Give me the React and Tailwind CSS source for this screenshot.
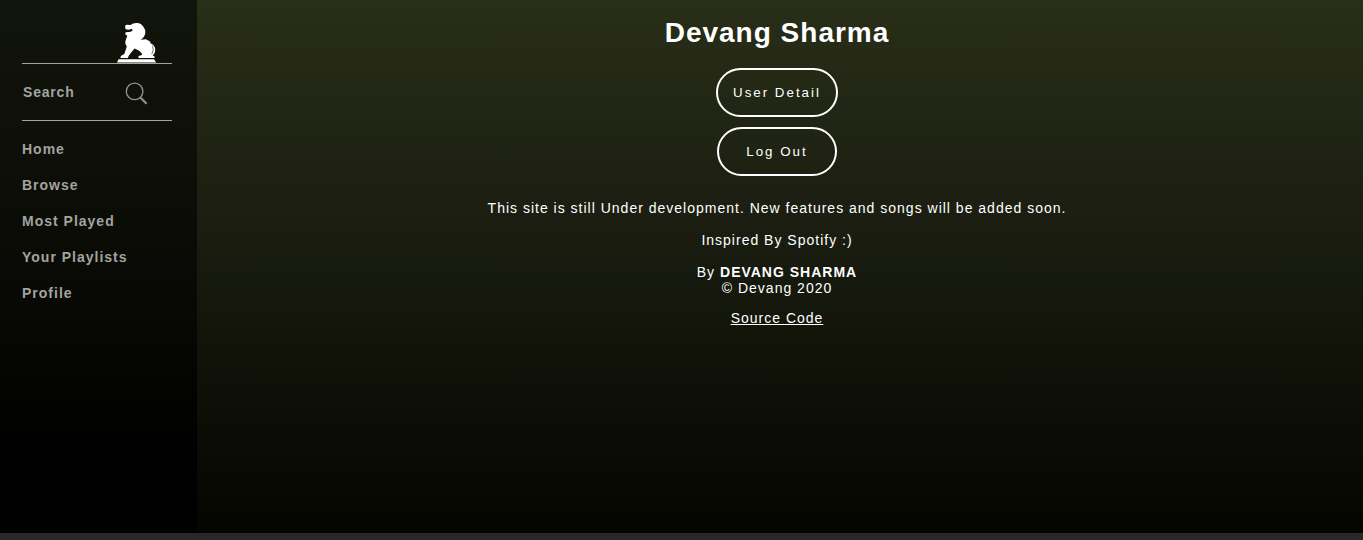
const links = ["Home", "Browse", "Most Played", "Your Playlists", "Profile"];

function LionLogo() {
  return (
    <svg viewBox="0 0 42 42" className="h-[42px] w-[42px]" fill="#fff">
      <path d="M1 41.6 L2.5 38.2 H38 L40.2 41.6 Z" />
      <path d="M9 5 L10.5 3.8 L14.5 4 Q17 1.7 21 1.9 Q25.5 2.3 27.2 5.5 Q29.8 8.5 29.3 12.2 Q28.5 16.5 24.6 18.8 L30 18.2 L34 20.5 L34.5 22.2 Q39.3 24.5 39.3 28.7 Q39.3 32.5 36.7 34.6 L38.5 35.3 V37.1 H22.5 V35 L26 34 Q26 31.5 22.8 29.5 L18.5 27.6 L13 34.2 L11.8 37.1 H4.5 L4.8 35 L8.3 33 L10.8 25.5 Q8.4 22 9.8 19 L11.3 14.7 L9.3 13.6 L9.6 11.2 L14.8 10.8 L16.7 9.2 L15.8 7.7 L13 8.7 L9.6 8.2 Z" />
      <path d="M36.6 24.8 Q38.2 29 35.8 33.2" fill="none" stroke="#15180e" strokeWidth="0.6" />
    </svg>
  );
}

function SearchIcon() {
  return (
    <svg viewBox="0 0 24 24" className="h-6 w-6" fill="none" stroke="#92928e">
      <circle cx="9.6" cy="9.4" r="8.3" strokeWidth="1.3" />
      <path d="M15.3 15.5 L21.6 21.7" strokeWidth="2.2" />
    </svg>
  );
}

export default function App() {
  return (
    <div className="flex h-[540px] w-full flex-col overflow-hidden bg-[#292727] font-['Liberation_Sans',Arial,sans-serif] text-sm leading-4 tracking-[1px] text-white">
      <div className="flex h-[533px] bg-[linear-gradient(to_bottom,#292e18,#1a1d10_230px,#040500)]">
        <aside className="flex w-[197px] shrink-0 flex-col bg-[linear-gradient(to_bottom,#12150c,#080904_300px,#000_450px)] pt-[21px] pr-[25px] pl-[22px] font-bold text-[#a3a39f]">
          <div className="flex h-[43px] justify-end border-b border-[#a3a39f] pr-[14px]">
            <LionLogo />
          </div>
          <div className="flex h-[57px] items-center justify-between border-b border-[#a3a39f] pr-[23px] pl-px">
            <span className="tracking-[0.8px]">Search</span>
            <span className="pt-[3px]"><SearchIcon /></span>
          </div>
          <nav className="flex flex-col gap-5 pt-5">
            {links.map((label) => (
              <a key={label} className="h-4">{label}</a>
            ))}
          </nav>
        </aside>
        <main className="flex flex-1 flex-col items-center pr-[6px] text-center">
          <h1 className="mt-[17px] text-[28px] leading-8 font-bold">Devang Sharma</h1>
          <button className="mt-[19px] h-[49px] w-[122px] rounded-[25px] border-2 border-white text-[13.333px] tracking-[2px]">User Detail</button>
          <button className="mt-[10px] h-[49px] w-[120px] rounded-[25px] border-2 border-white text-[13.333px] tracking-[2px]">Log Out</button>
          <p className="mt-6">This site is still Under development. New features and songs will be added soon.</p>
          <p className="mt-4">Inspired By Spotify :)</p>
          <p className="mt-4">By <b>DEVANG SHARMA</b><br />© Devang 2020</p>
          <a className="mt-[14px] underline">Source Code</a>
        </main>
      </div>
    </div>
  );
}
